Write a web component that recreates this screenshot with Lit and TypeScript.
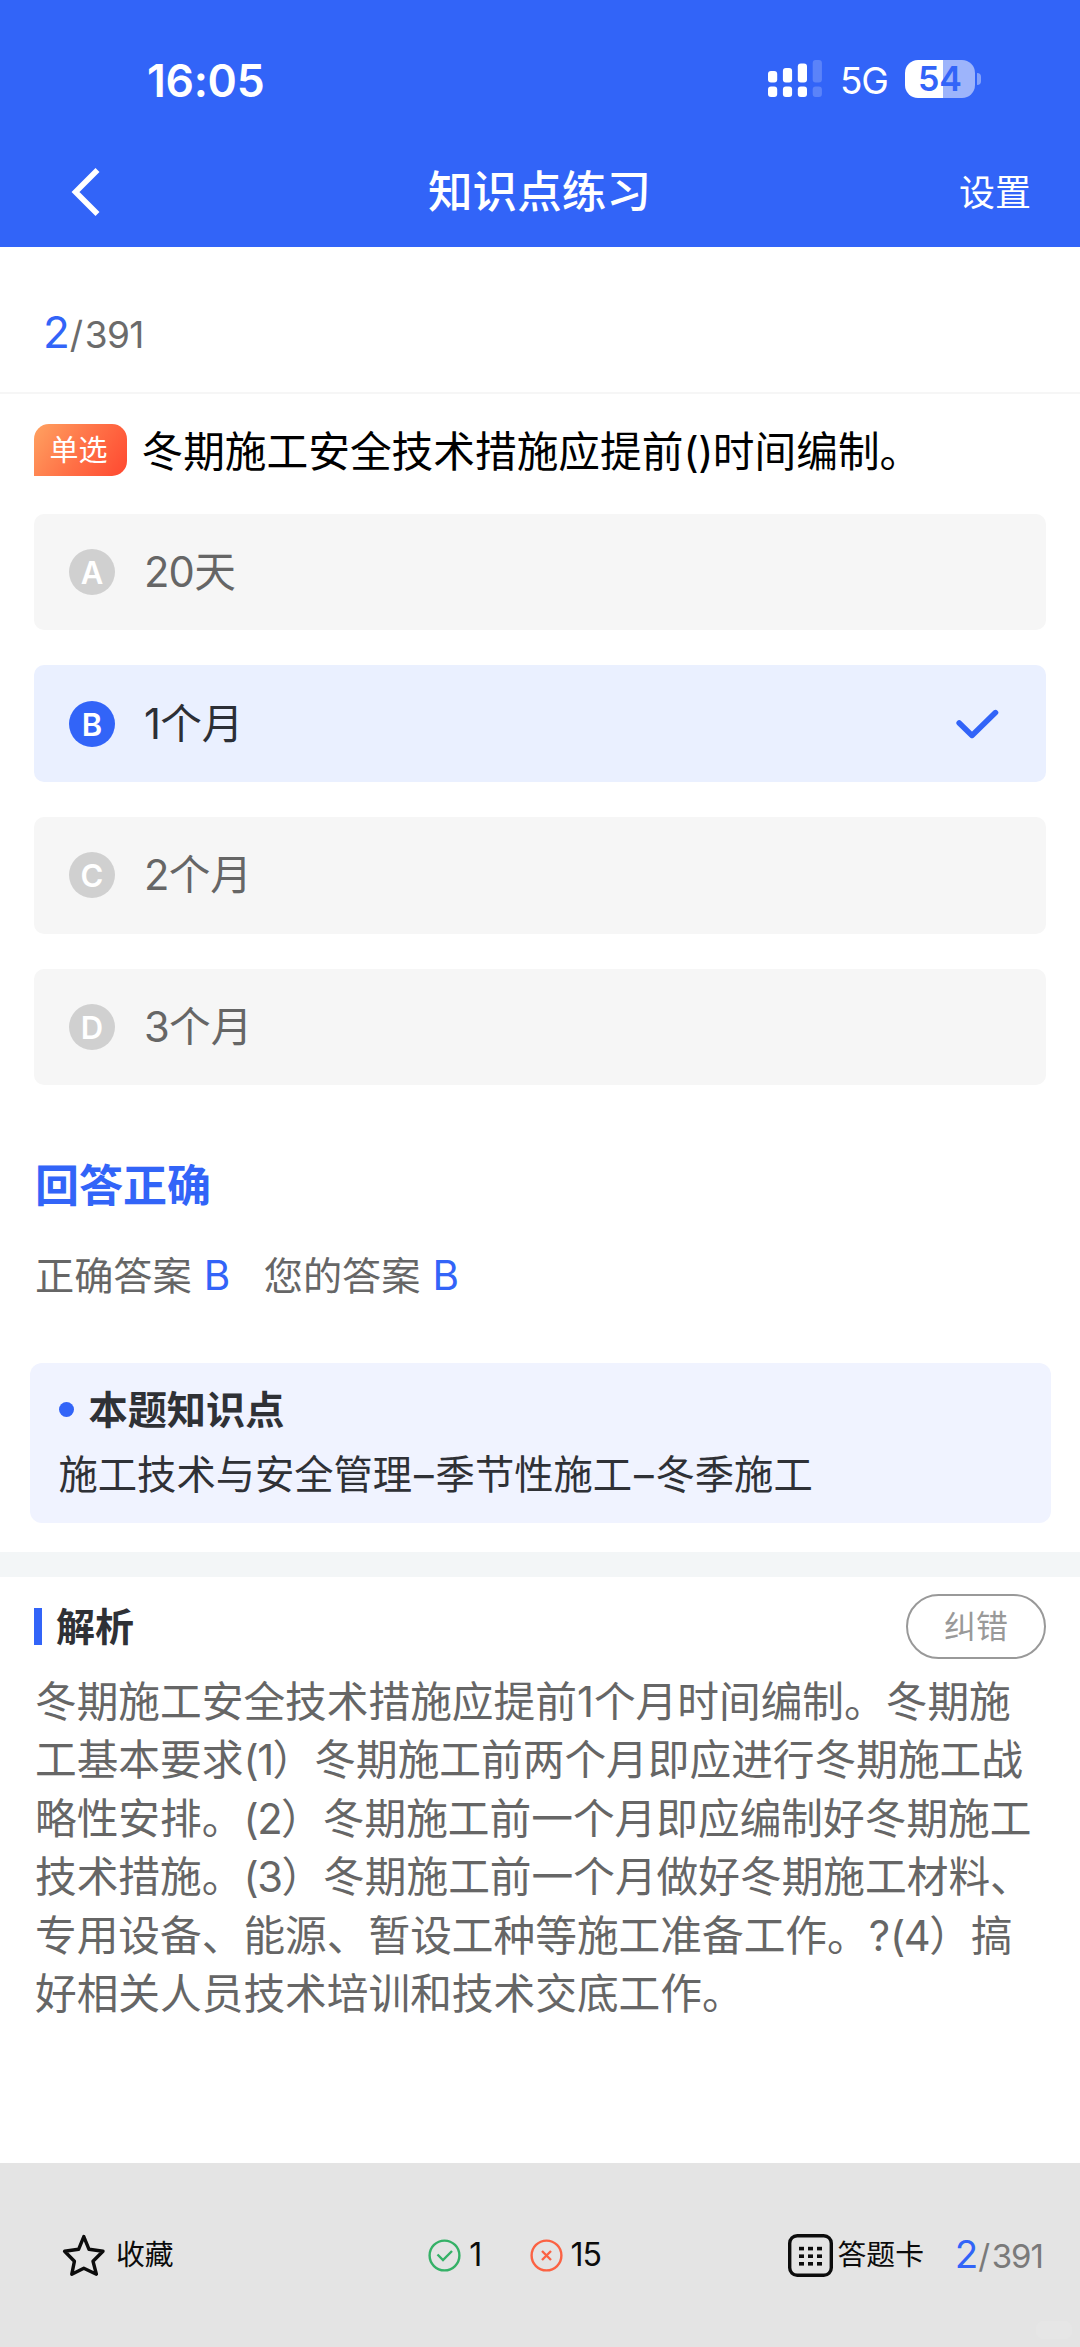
import { LitElement, html, css, svg } from "lit";
import { customElement, property } from "lit/decorators.js";
import { classMap } from "lit/directives/class-map.js";

@customElement("status-bar")
class StatusBar extends LitElement {
  static styles = css`
    :host { display: flex; align-items: center; justify-content: space-between; height: 158px; padding: 0 99px 0 147px; box-sizing: border-box; color: #fff; }
    .time { font-size: 44.5px; font-weight: 600; line-height: 54px; letter-spacing: -0.3px; padding-top: 3px; }
    .right { display: flex; align-items: center; }
    .signal { width: 54px; height: 38px; margin-right: 18px; }
    .net { font-size: 37px; font-weight: 400; line-height: 40px; width: 65px; padding-top: 4px; letter-spacing: -1.2px; }
    .battery { display: flex; align-items: center; }
    .cell { width: 70px; height: 38px; border-radius: 13px; display: flex; align-items: center; justify-content: center;
      background: linear-gradient(90deg, #fff 54%, #9db4fb 54%); color: #3264f8; font-size: 34px; font-weight: 600; line-height: 38px; }
    .nub { width: 4px; height: 12px; margin-left: 2px; border-radius: 0 4px 4px 0; background: #84a2fa; }
  `;
  render() {
    const tops = [11, 8, 3.5, 0];
    return html`
      <div class="time">16:05</div>
      <div class="right">
        <svg class="signal" viewBox="0 0 54 38" fill="#fff">
          ${tops.map((t, i) => svg`<g opacity=${i === 3 ? 0.2 : 1}>
            <rect x=${i * 14.9} y=${t} width="9.2" height=${22.5 - t} rx="3"></rect>
            <rect x=${i * 14.9} y="26.5" width="9.2" height="10.5" rx="3"></rect></g>`)}
        </svg>
        <div class="net">5G</div>
        <div class="battery"><div class="cell">54</div><div class="nub"></div></div>
      </div>`;
  }
}

@customElement("nav-bar")
class NavBar extends LitElement {
  static styles = css`
    :host { display: grid; grid-template-columns: 1fr auto 1fr; align-items: center; height: 88px; padding: 0 50px 0 71px; box-sizing: border-box; color: #fff; }
    .back { width: 30px; height: 50px; margin-top: -20px; }
    .title { font-size: 44.6px; font-weight: 500; line-height: 60px; margin: -21px 22px 0 0; }
    .action { font-size: 36px; line-height: 50px; text-align: right; margin-top: -19px; margin-right: -1px; }
  `;
  render() {
    return html`
      <svg class="back" viewBox="0 0 30 50" fill="none" stroke="#fff" stroke-width="5.6"><path d="M26.5 3 L4.5 25 L26.5 47"></path></svg>
      <div class="title">知识点练习</div>
      <div class="action">设置</div>`;
  }
}

@customElement("page-counter")
class PageCounter extends LitElement {
  @property({ type: Boolean, reflect: true }) small = false;
  static styles = css`
    :host { display: block; font-size: 37px; line-height: 54px; color: #6b6b6b; letter-spacing: -0.7px; white-space: nowrap; }
    .cur { font-size: 44px; color: #3264f8; letter-spacing: 0; }
    .slash { letter-spacing: 1.6px; }
    :host([small]) { font-size: 33px; letter-spacing: -1px; color: #7a7a7a; }
    :host([small]) .cur { font-size: 38.5px; }
  `;
  render() {
    return html`<span class="cur">2</span><span class="slash">/</span>391`;
  }
}

@customElement("answer-option")
class AnswerOption extends LitElement {
  @property() letter = "";
  @property() label = "";
  @property({ type: Boolean }) chosen = false;
  static styles = css`
    :host { display: block; }
    .row { display: flex; align-items: center; height: 116.6px; padding: 0 47px 0 35px; box-sizing: border-box; border-radius: 10px; background: #f6f6f6; color: #666; }
    .badge { width: 46px; height: 46px; border-radius: 50%; background: #d0d0d0; color: #fff; text-align: center; font-size: 31px; font-weight: 600; line-height: 47px; }
    .label { flex: 1; margin-left: 29px; font-size: 41.7px; line-height: 60px; }
    .num { letter-spacing: -0.8px; }
    .tick { width: 43px; height: 30px; }
    .chosen { background: #eaf0ff; color: #2c2f36; }
    .chosen .badge { background: #3264f8; }
  `;
  render() {
    const digits = this.label.match(/^\d+/)?.[0] ?? "";
    return html`<div class=${classMap({ row: true, chosen: this.chosen })}>
      <div class="badge">${this.letter}</div>
      <div class="label"><span class="num">${digits}</span>${this.label.slice(digits.length)}</div>
      ${this.chosen ? html`<svg class="tick" viewBox="0 0 43 30" fill="none" stroke="#3264f8" stroke-width="5.6" stroke-linecap="round" stroke-linejoin="round"><path d="M3.2 14 L16 26.4 L39.5 3.6"></path></svg>` : ""}
    </div>`;
  }
}

@customElement("bottom-bar")
class BottomBar extends LitElement {
  static styles = css`
    :host { display: flex; align-items: center; height: 184px; padding: 0 37px 0 62px; box-sizing: border-box; background: #e4e4e4; color: #0c0c0c; font-size: 28.8px; line-height: 40px; position: relative; }
    .item { display: flex; align-items: center; }
    .star { width: 44px; height: 44px; margin-right: 10px; }
    .fav { width: 367px; }
    .ring { width: 33px; height: 33px; margin-right: 8px; }
    .num { font-size: 32px; letter-spacing: -1px; }
    .ok { width: 101.5px; }
    .bad { width: 258.5px; }
    .grid { width: 45px; height: 43px; margin-right: 5px; }
    .card { width: 167.5px; }
    .mark { position: absolute; right: 8px; bottom: 8px; width: 36px; height: 18px; border-radius: 7px; background: #e6e6e6; }
  `;
  render() {
    return html`
      <div class="item fav">
        <svg class="star" viewBox="0 0 44 44" fill="none" stroke="#0c0c0c" stroke-width="3.4" stroke-linejoin="round"><path d="M21.8 3.6 L27 16.3 L41 18.3 L31 28.3 L34.4 41.2 L21.8 35.2 L9.8 41.2 L12.4 28.3 L2.6 18.3 L16.6 16.3 Z"></path></svg>
        收藏
      </div>
      <div class="item ok">
        <svg class="ring" viewBox="0 0 33 33" fill="none" stroke="#35b167" stroke-width="2.4"><circle cx="16.5" cy="16.5" r="14.9"></circle><path d="M9.5 15.5 L15 21 L24 12"></path></svg>
        <span class="num">1</span>
      </div>
      <div class="item bad">
        <svg class="ring" viewBox="0 0 33 33" fill="none" stroke="#fb6243" stroke-width="2.4"><circle cx="16.5" cy="16.5" r="14.9"></circle><path d="M12 12 L21 21 M21 12 L12 21"></path></svg>
        <span class="num">15</span>
      </div>
      <div class="item card">
        <svg class="grid" viewBox="0 0 45 43">
          <rect x="1.7" y="1.7" width="41.6" height="39.6" rx="7.5" fill="none" stroke="#0c0c0c" stroke-width="3.4"></rect>
          ${[11, 20, 29].map((x) => [12.8, 20.4, 28].map((y) => svg`<rect x=${x} y=${y} width="5" height="3.6" fill="#0c0c0c"></rect>`))}
        </svg>
        答题卡
      </div>
      <page-counter small></page-counter>
      <div class="mark"></div>`;
  }
}

@customElement("app-root")
class AppRoot extends LitElement {
  static styles = css`
    :host { display: flex; flex-direction: column; width: 1080px; height: 2347px; overflow: hidden; background: #fff; text-spacing-trim: space-all;
      font-family: Inter, "Noto Sans CJK SC", sans-serif; color: #2f3136; }
    .head { background: #3264f8; height: 246.5px; flex: none; }
    .count { height: 147px; padding: 58px 0 0 43px; box-sizing: border-box; border-bottom: 2.5px solid #f6f6f6; flex: none; }
    .ask { display: flex; align-items: center; height: 52px; margin: 30.5px 0 0 34px; flex: none; color: #000; }
    .tag { width: 93px; height: 52px; padding-right: 4px; box-sizing: border-box; border-radius: 15px 15px 15px 0; background: linear-gradient(125deg, #ffa261 0%, #ff7247 50%, #ff4830 100%); color: #fff; font-size: 29px; line-height: 54px; text-align: center; }
    .q { margin-left: 14.5px; font-size: 41.7px; line-height: 60px; white-space: nowrap; padding-top: 3px; }
    .p { letter-spacing: -0.5px; }
    .opts { display: flex; flex-direction: column; gap: 35.2px; margin: 37.5px 34px 0 34px; }
    .verdict { margin: 70px 0 0 35px; font-size: 44px; font-weight: 600; line-height: 62px; color: #3264f8; }
    .answers { display: flex; margin: 30px 0 0 35px; font-size: 39.2px; line-height: 58px; color: #666; }
    .ans { display: flex; }
    .ans b { font-size: 40.5px; font-weight: 400; color: #3264f8; margin: 0 33.5px 0 12px; }
    .point { height: 160px; margin: 57.5px 29.5px 0; padding: 15px 29px; box-sizing: border-box; border-radius: 12px; background: #f0f3ff; flex: none; }
    .ph { display: flex; align-items: center; font-size: 39.2px; font-weight: 600; line-height: 64px; }
    .dot { width: 15px; height: 15px; border-radius: 50%; background: #3264f8; margin-right: 15px; }
    .pt { font-size: 39.3px; line-height: 66px; white-space: nowrap; }
    .dash { padding: 0 1.9px; }
    .band { height: 25px; margin-top: 29px; background: #f3f6f7; flex: none; }
    .eh { display: flex; align-items: center; height: 64px; margin: 18px 34px 0 34px; flex: none; }
    .bar { width: 8px; height: 37px; background: #3264f8; margin-right: 14px; }
    .et { flex: 1; font-size: 39px; font-weight: 600; line-height: 58px; }
    .fix { width: 140px; height: 65px; box-sizing: border-box; border: 2px solid #999; border-radius: 33px; color: #999; font-size: 32px; line-height: 61px; text-align: center; }
    .body { display: flex; flex-direction: column; gap: 0.4px; margin: 14px 0 0 35px; font-size: 41.7px; line-height: 58px; color: #666; white-space: nowrap; }
    .n { letter-spacing: -1.5px; }
    .foot { margin-top: auto; }
  `;
  render() {
    const options = [["A", "20天"], ["B", "1个月"], ["C", "2个月"], ["D", "3个月"]];
    const lines = [
      ["冬期施工安全技术措施应提前1个月时间编制。冬期施", "", ""],
      ["工基本要求", "(1", "）冬期施工前两个月即应进行冬期施工战"],
      ["略性安排。", "(2", "）冬期施工前一个月即应编制好冬期施工"],
      ["技术措施。", "(3", "）冬期施工前一个月做好冬期施工材料、"],
      ["专用设备、能源、暂设工种等施工准备工作。?", "(4", "）搞"],
      ["好相关人员技术培训和技术交底工作。", "", ""],
    ];
    return html`
      <div class="head"><status-bar></status-bar><nav-bar></nav-bar></div>
      <div class="count"><page-counter></page-counter></div>
      <div class="ask"><div class="tag">单选</div><div class="q">冬期施工安全技术措施应提前<span class="p">()</span>时间编制。</div></div>
      <div class="opts">
        ${options.map(([l, t]) => html`<answer-option .letter=${l} .label=${t} .chosen=${l === "B"}></answer-option>`)}
      </div>
      <div class="verdict">回答正确</div>
      <div class="answers"><div class="ans">正确答案<b>B</b></div><div class="ans">您的答案<b>B</b></div></div>
      <div class="point">
        <div class="ph"><span class="dot"></span>本题知识点</div>
        <div class="pt">施工技术与安全管理<span class="dash">–</span>季节性施工<span class="dash">–</span>冬季施工</div>
      </div>
      <div class="band"></div>
      <div class="eh"><div class="bar"></div><div class="et">解析</div><div class="fix">纠错</div></div>
      <div class="body">${lines.map(([a, n, b]) => html`<div>${a}<span class="n">${n}</span>${b}</div>`)}</div>
      <bottom-bar class="foot"></bottom-bar>`;
  }
}
